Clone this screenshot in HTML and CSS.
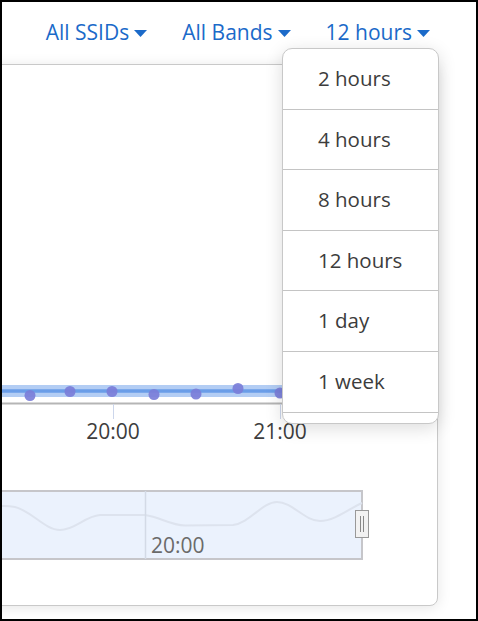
FILE: index.html
```html
<!DOCTYPE html>
<html>
<head>
    <title>Client Count</title>
    <link rel="stylesheet" href="styles.css">
</head>
<body>
    <div class="frame">
        <div class="toolbar">
            <span class="picker">All SSIDs<svg class="caret" width="13" height="7" viewBox="0 0 13 7"><path d="M0 0H13L6.5 7Z"/></svg></span>
            <span class="picker">All Bands<svg class="caret" width="13" height="7" viewBox="0 0 13 7"><path d="M0 0H13L6.5 7Z"/></svg></span>
            <span class="picker">12 hours<svg class="caret" width="13" height="7" viewBox="0 0 13 7"><path d="M0 0H13L6.5 7Z"/></svg></span>
        </div>

        <div class="card">
            <!-- chart drawn in page coordinates via the viewBox -->
            <svg class="chart" width="464" height="540" viewBox="-27 65 464 540">
                <line x1="-27" y1="391" x2="300" y2="391" stroke="#b3cdf4" stroke-width="12"/>
                <line x1="-27" y1="391" x2="300" y2="391" stroke="#6a9de8" stroke-width="3.5"/>
                <g fill="#7b7ed8" fill-opacity="0.92">
                    <circle cx="30" cy="395.5" r="5.5"/>
                    <circle cx="70" cy="391.5" r="5.5"/>
                    <circle cx="112" cy="391.5" r="5.5"/>
                    <circle cx="154" cy="394.5" r="5.5"/>
                    <circle cx="196" cy="394" r="5.5"/>
                    <circle cx="238" cy="388.5" r="5.5"/>
                    <circle cx="280" cy="393" r="5.5"/>
                </g>
                <line x1="-27" y1="403.5" x2="420" y2="403.5" stroke="#b5b5b5" stroke-width="2"/>
                <line x1="113.5" y1="404" x2="113.5" y2="419" stroke="#ccd6eb"/>
                <line x1="280.5" y1="404" x2="280.5" y2="419" stroke="#ccd6eb"/>
                <text class="axis-label" x="113" y="439" text-anchor="middle">20:00</text>
                <text class="axis-label" x="280" y="439" text-anchor="middle">21:00</text>

                <rect x="-30" y="491" width="392" height="68" fill="#ebf2fd" stroke="#c6c6ca" stroke-width="2"/>
                <path d="M-27 512 C-10 506 5 505 15 507 C30 510 45 530 60 530 C75 530 85 516 100 515 L145 515 C160 517 170 525 185 525.5 L233 525 C250 523 262 502 277 502 C292 502 305 521 320 521 C335 521 350 508 362 503" fill="none" stroke="#dde3ee" stroke-width="2"/>
                <line x1="145.5" y1="491" x2="145.5" y2="559" stroke="#d3dae6" stroke-width="1.5"/>
                <text class="nav-label" x="151" y="553">20:00</text>
                <rect x="355.5" y="510.5" width="13" height="27" fill="#f2f2f2" stroke="#999"/>
                <line x1="360.5" y1="516" x2="360.5" y2="532" stroke="#888"/>
                <line x1="363.5" y1="516" x2="363.5" y2="532" stroke="#888"/>
            </svg>
        </div>

        <ul class="menu">
            <li>2 hours</li>
            <li>4 hours</li>
            <li>8 hours</li>
            <li>12 hours</li>
            <li>1 day</li>
            <li>1 week</li>
        </ul>
    </div>
</body>
</html>
```

FILE: styles.css
```css
body { margin: 0; font-family: "Open Sans", "Liberation Sans", sans-serif; background-color: #fff; }
.frame {
    position: relative;
    width: 478px;
    height: 621px;
    box-sizing: border-box;
    border: 2px solid #000;
    overflow: hidden;
    background-color: #fff;
}
.toolbar {
    display: flex;
    justify-content: flex-end;
    gap: 35px;
    height: 62px;
    box-sizing: border-box;
    padding: 16px 46px 0 0;
}
.picker {
    display: flex;
    align-items: center;
    font-size: 21px;
    line-height: 28px;
    color: #1b6ac9;
    height: 28px;
}
.caret { margin-left: 5px; margin-top: 2px; fill: #1b6ac9; }
.card {
    margin-left: -30px;
    width: 466px;
    height: 542px;
    box-sizing: border-box;
    border: 1px solid #c9c9c9;
    border-radius: 8px;
    background-color: #fff;
    box-shadow: 0 2px 14px rgba(0,0,0,0.10);
    overflow: hidden;
}
.chart { display: block; }
.axis-label { font-family: "Open Sans", sans-serif; font-size: 21px; fill: #3d3d3d; }
.nav-label { font-family: "Open Sans", sans-serif; font-size: 21px; fill: #6a6a6a; }
.menu {
    position: absolute;
    left: 280px;
    top: 46px;
    width: 157px;
    margin: 0;
    padding: 0 0 10px;
    list-style: none;
    box-sizing: border-box;
    border: 1px solid #c8c8c8;
    border-radius: 10px;
    background-color: #fff;
    box-shadow: 0 4px 18px rgba(0,0,0,0.14);
}
.menu li {
    height: 59.6px;
    line-height: 59.6px;
    padding-left: 35px;
    font-size: 20.5px;
    color: #3c3c3c;
    border-bottom: 1px solid #c4c4c4;
}
```
